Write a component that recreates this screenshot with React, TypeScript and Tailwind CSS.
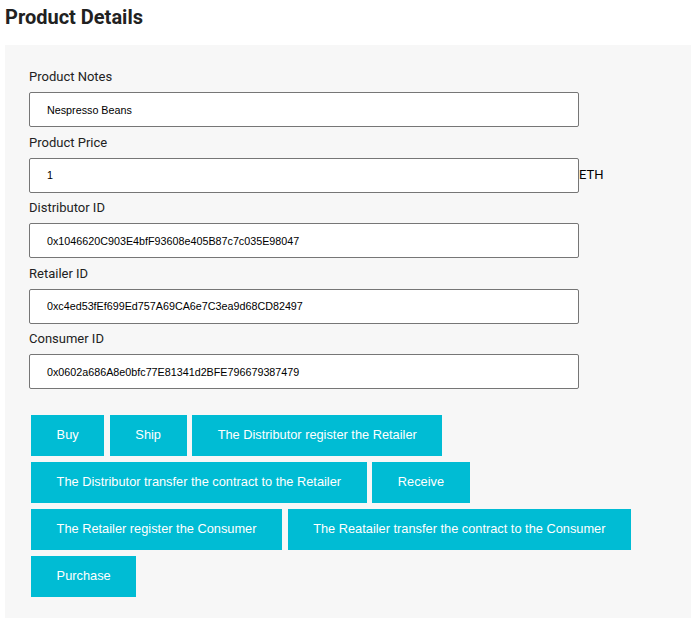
import React from "react";

const fields = [
  { label: "Product Notes", value: "Nespresso Beans" },
  { label: "Product Price", value: "1", suffix: "ETH" },
  { label: "Distributor ID", value: "0x1046620C903E4bfF93608e405B87c7c035E98047" },
  { label: "Retailer ID", value: "0xc4ed53fEf699Ed757A69CA6e7C3ea9d68CD82497" },
  { label: "Consumer ID", value: "0x0602a686A8e0bfc77E81341d2BFE796679387479" },
];

const buttons = [
  "Buy",
  "Ship",
  "The Distributor register the Retailer",
  "The Distributor transfer the contract to the Retailer",
  "Receive",
  "The Retailer register the Consumer",
  "The Reatailer transfer the contract to the Consumer",
  "Purchase",
];

export default function App() {
  return (
    <div className="min-h-[618px] bg-white font-['Roboto',sans-serif] overflow-hidden">
      <h2 className="pl-[5px] pt-[3px] text-[20px] leading-[28px] font-bold text-[#212121]">
        Product Details
      </h2>
      <div className="ml-[5px] mt-[14px] bg-[#f7f7f7] pl-[24px] pr-[24px] pt-[22px] pb-[24px]">
        <div className="flex flex-col">
          {fields.map((f) => (
            <div key={f.label} className="flex flex-col">
              <label className="text-[13px] leading-[19.5px] text-[#222] mb-[5.5px]">
                {f.label}
              </label>
              <div className="flex items-center mb-[5.5px]">
                <input
                  readOnly
                  value={f.value}
                  className="w-[550px] h-[35px] bg-white border border-[#767676] rounded-[2px] pl-[17px] text-[10.75px] text-black font-['Liberation_Sans',Arial,sans-serif] outline-none"
                />
                {f.suffix && (
                  <span className="text-[13px] text-black leading-none -mt-[1px]">{f.suffix}</span>
                )}
              </div>
            </div>
          ))}
        </div>
        <div className="mt-[20px] ml-[2px] flex flex-wrap gap-x-[5.5px] gap-y-[6px]">
          {buttons.map((b) => (
            <button
              key={b}
              className="h-[41px] px-[25.6px] bg-[#00bcd4] text-white text-[12.8px] font-['Liberation_Sans',Arial,sans-serif]"
            >
              {b}
            </button>
          ))}
        </div>
      </div>
    </div>
  );
}
